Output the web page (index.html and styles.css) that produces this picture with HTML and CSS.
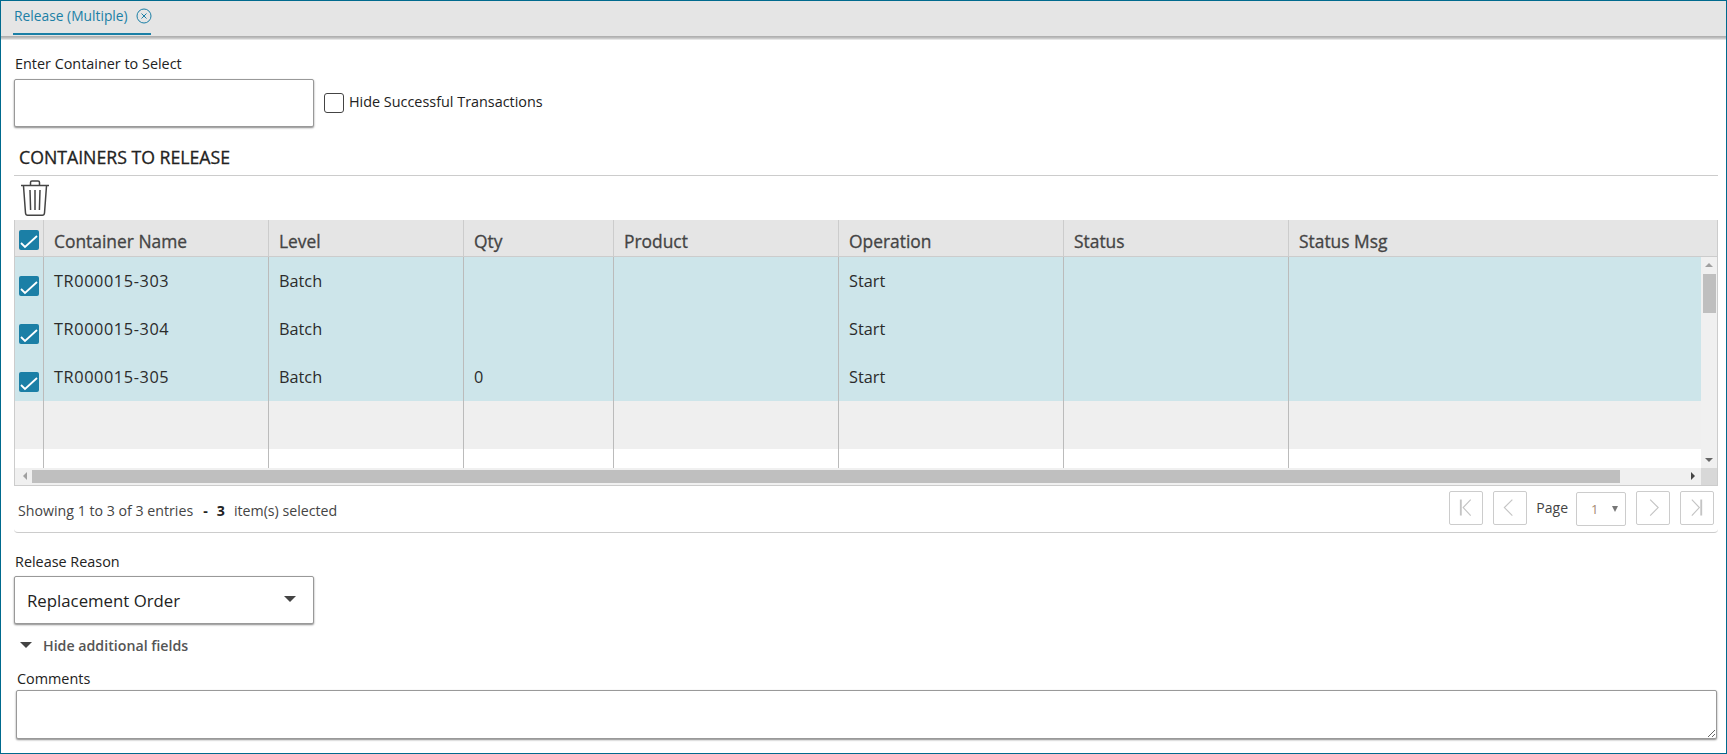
FILE: index.html
```html
<!DOCTYPE html>
<html lang="en">
<head>
    <meta charset="UTF-8">
    <meta name="viewport" content="width=device-width, initial-scale=1.0">
    <title>Release (Multiple)</title>
    <link rel="stylesheet" href="styles.css">
</head>
<body>
    <div class="frame">
        <div class="tabbar">
            <div class="tab">
                <span>Release (Multiple)</span>
                <svg class="tab_close" viewBox="0 0 16 16" width="16" height="16"><circle cx="8" cy="8" r="7" /><path d="M5.5 5.5l5 5M10.5 5.5l-5 5" /></svg>
            </div>
        </div>

        <div class="content">
            <label class="field_label first_label" for="container">Enter Container to Select</label>
            <div class="select_row">
                <input class="box_input" type="text" id="container">
                <span class="checkbox"></span>
                <span class="check_label">Hide Successful Transactions</span>
            </div>

            <h2 class="section_title">CONTAINERS TO RELEASE</h2>

            <svg class="trash" viewBox="0 0 28 36" width="28" height="36">
                <path d="M0 5.500h28M9.500 5V2.500q0-1.500 1.500-1.500h6q1.500 0 1.500 1.500V5" />
                <path d="M2.500 6l2 27q.2 2.200 2.200 2.200h14.600q2 0 2.200-2.200l2-27" />
                <path d="M9 10l.6 20M14 10v20M19 10l-.6 20" />
            </svg>

            <div class="grid">
                <div class="grid_row grid_head">
                    <div class="cell cell_check">
                        <span class="checked"><svg viewBox="0 0 20 20" width="20" height="20"><path d="M2 13l4 4L18 6" /></svg></span>
                    </div>
                    <div class="cell">Container Name</div>
                    <div class="cell">Level</div>
                    <div class="cell">Qty</div>
                    <div class="cell">Product</div>
                    <div class="cell">Operation</div>
                    <div class="cell">Status</div>
                    <div class="cell">Status Msg</div>
                </div>

                <div class="grid_middle">
                    <div class="grid_body">
                        <div class="grid_row row_selected">
                            <div class="cell cell_check">
                                <span class="checked"><svg viewBox="0 0 20 20" width="20" height="20"><path d="M2 13l4 4L18 6" /></svg></span>
                            </div>
                            <div class="cell cell_name">TR000015-303</div>
                            <div class="cell">Batch</div>
                            <div class="cell"></div>
                            <div class="cell"></div>
                            <div class="cell">Start</div>
                            <div class="cell"></div>
                            <div class="cell"></div>
                        </div>
                        <div class="grid_row row_selected">
                            <div class="cell cell_check">
                                <span class="checked"><svg viewBox="0 0 20 20" width="20" height="20"><path d="M2 13l4 4L18 6" /></svg></span>
                            </div>
                            <div class="cell cell_name">TR000015-304</div>
                            <div class="cell">Batch</div>
                            <div class="cell"></div>
                            <div class="cell"></div>
                            <div class="cell">Start</div>
                            <div class="cell"></div>
                            <div class="cell"></div>
                        </div>
                        <div class="grid_row row_selected">
                            <div class="cell cell_check">
                                <span class="checked"><svg viewBox="0 0 20 20" width="20" height="20"><path d="M2 13l4 4L18 6" /></svg></span>
                            </div>
                            <div class="cell cell_name">TR000015-305</div>
                            <div class="cell">Batch</div>
                            <div class="cell">0</div>
                            <div class="cell"></div>
                            <div class="cell">Start</div>
                            <div class="cell"></div>
                            <div class="cell"></div>
                        </div>
                        <div class="grid_row row_empty">
                            <div class="cell"></div><div class="cell"></div><div class="cell"></div><div class="cell"></div>
                            <div class="cell"></div><div class="cell"></div><div class="cell"></div><div class="cell"></div>
                        </div>
                        <div class="grid_row row_blank">
                            <div class="cell"></div><div class="cell"></div><div class="cell"></div><div class="cell"></div>
                            <div class="cell"></div><div class="cell"></div><div class="cell"></div><div class="cell"></div>
                        </div>
                    </div>
                    <div class="vscroll">
                        <span class="arrow_up"></span>
                        <span class="vthumb"></span>
                        <span class="arrow_down"></span>
                    </div>
                </div>

                <div class="hscroll">
                    <div class="htrack">
                        <span class="arrow_left"></span>
                        <span class="hthumb"></span>
                        <span class="arrow_right"></span>
                    </div>
                    <div class="corner"></div>
                </div>
            </div>

            <div class="grid_footer">
                <div class="entries">
                    <span>Showing 1 to 3 of 3 entries</span>
                    <b class="dash">-</b>
                    <b class="count">3</b>
                    <span>item(s) selected</span>
                </div>
                <div class="pager">
                    <span class="page_btn"><svg viewBox="0 0 34 34" width="32" height="32"><path d="M11.500 8v17" class="bar" /><path d="M22 8l-8 8.500 8 8.500" /></svg></span>
                    <span class="page_btn"><svg viewBox="0 0 34 34" width="32" height="32"><path d="M19.500 8l-8.500 8.500 8.500 8.500" /></svg></span>
                    <span class="page_text">Page</span>
                    <span class="page_select"><span>1</span><i></i></span>
                    <span class="page_btn"><svg viewBox="0 0 34 34" width="32" height="32"><path d="M14 8l8.500 8.500L14 25" /></svg></span>
                    <span class="page_btn"><svg viewBox="0 0 34 34" width="32" height="32"><path d="M11.500 8l8 8.500-8 8.500" /><path d="M21.500 8v17" class="bar" /></svg></span>
                </div>
            </div>

            <label class="field_label reason_label">Release Reason</label>
            <div class="box_input reason_select">
                <span>Replacement Order</span>
                <i class="caret"></i>
            </div>

            <div class="more_fields">
                <i class="caret"></i>
                <span>Hide additional fields</span>
            </div>

            <label class="field_label comments_label" for="comments">Comments</label>
            <textarea class="comments" id="comments"></textarea>
        </div>
    </div>
</body>
</html>
```

FILE: styles.css
```css
* {
    box-sizing: border-box;
}

html, body {
    margin: 0;
    height: 100%;
    overflow: hidden;
}

body {
    font-family: "Open Sans", "Noto Sans", Arial, sans-serif;
    font-size: 14.4px;
    color: #333;
    background: #fff;
}

.frame {
    width: 1727px;
    height: 754px;
    border: 1px solid #006a8e;
    overflow: hidden;
}

.tabbar {
    position: relative;
    height: 35px;
    padding-left: 12px;
    background: #e5e5e5;
    box-shadow: 0 1px 0 #b0b0b0, 0 2px 0 #bbb, 0 3px 0 #ccc, 0 4px 0 #e6e6e6;
}

.tab {
    display: flex;
    align-items: center;
    gap: 8px;
    width: 138px;
    height: 34px;
    padding: 0 0 3px 1px;
    border-bottom: 2px solid #1b7fa6;
    font-size: 13.800px;
    white-space: nowrap;
    color: #1b7fa6;
}

.tab_close {
    flex-shrink: 0;
    fill: none;
    stroke: #1b7fa6;
    stroke-width: 1;
}

.content {
    padding: 0 8px 0 13px;
}

.field_label {
    display: block;
    height: 20px;
    line-height: 20px;
    margin-left: 1px;
    color: #222;
}

.first_label {
    margin-top: 19px;
    line-height: 18px;
}

.select_row {
    display: flex;
    align-items: center;
    margin-top: 4px;
}

.box_input {
    width: 300px;
    height: 48px;
    background: #fff;
    border: 1px solid #999;
    border-radius: 2px;
    box-shadow: 0 1px 2px #888;
}

.checkbox {
    width: 20px;
    height: 20px;
    margin-left: 10px;
    border: 1px solid #444;
    border-radius: 3px;
}

.check_label {
    margin: 0 0 3px 5px;
    color: #222;
}

.section_title {
    height: 31px;
    margin: 18px 0 0;
    padding-left: 5px;
    border-bottom: 1px solid #ccc;
    font-size: 17.700px;
    font-weight: 400;
    -webkit-text-stroke: 0.3px #222;
    line-height: 24px;
    color: #222;
}

.trash {
    display: block;
    margin: 4px 0 4px 7px;
    fill: none;
    stroke: #444;
    stroke-width: 1.500;
}

.grid {
    height: 266px;
    border-left: 1px solid #ccc;
    border-right: 1px solid #ccc;
    border-bottom: 1px solid #ccc;
}

.grid_row {
    display: grid;
    grid-template-columns: 29px 225px 195px 150px 225px 225px 225px 1fr;
}

.grid_head {
    height: 37px;
    background: #e5e5e5;
    border-bottom: 1px solid #ccc;
    font-size: 17.400px;
    -webkit-text-stroke: 0.3px #444;
    color: #444;
}

.grid_head .cell {
    padding-top: 8px;
    line-height: 26px;
    border-right-color: #ccc;
}

.grid_head .cell:last-child,
.grid_body .cell:last-child {
    border-right: none;
}

.grid_head .cell_check {
    padding: 10px 0 0 4px;
}

.grid_middle {
    display: flex;
    height: 211px;
}

.grid_body {
    flex: 1;
    overflow: hidden;
    font-size: 16.300px;
    color: #2b2b2b;
}

.cell {
    padding-left: 10px;
    border-right: 1px solid #bbb;
    line-height: 48px;
}

.cell_name {
    letter-spacing: 0.6px;
}

.grid_body .grid_row {
    height: 48px;
}

.grid_body .cell_check {
    padding: 19px 0 0 4px;
}

.row_selected {
    background: #cde5ea;
}

.row_empty {
    background: #efefef;
}

.row_blank {
    background: #fff;
}

.checked {
    display: block;
    width: 20px;
    height: 20px;
    background: #1b7fa6;
    border-radius: 2px;
}

.checked svg {
    display: block;
    fill: none;
    stroke: #fff;
    stroke-width: 1.800;
}

.vscroll {
    position: relative;
    width: 16px;
    background: #f0f0f0;
}

.vthumb {
    position: absolute;
    top: 17px;
    left: 2px;
    width: 13px;
    height: 39px;
    background: #bfbfbf;
}

.arrow_up,
.arrow_down,
.arrow_left,
.arrow_right {
    position: absolute;
    width: 0;
    height: 0;
    border: 4px solid transparent;
}

.arrow_up {
    top: 2px;
    left: 4px;
    border-bottom-color: #a0a0a0;
}

.arrow_down {
    bottom: 2px;
    left: 4px;
    border-top-color: #666;
}

.hscroll {
    display: flex;
    height: 17px;
}

.htrack {
    position: relative;
    flex: 1;
    background: #f0f0f0;
}

.hthumb {
    position: absolute;
    top: 2px;
    left: 17px;
    width: 1588px;
    height: 13px;
    background: #bfbfbf;
}

.arrow_left {
    top: 4px;
    left: 4px;
    border-right-color: #a0a0a0;
}

.arrow_right {
    top: 4px;
    right: 2px;
    border-left-color: #444;
}

.corner {
    width: 16px;
    background: #d8d8d8;
}

.grid_footer {
    display: flex;
    justify-content: space-between;
    height: 47px;
    padding: 5px 4px 0 4px;
    border-bottom: 1px solid #ccc;
    border-radius: 0 0 4px 4px;
}

.entries {
    display: flex;
    height: 20px;
    margin-top: 10px;
    line-height: 20px;
    font-size: 14.200px;
    color: #444;
}

.dash {
    margin-left: 10px;
    color: #222;
}

.count {
    margin-left: 9px;
    color: #222;
}

.entries .count + span {
    margin-left: 9px;
}

.pager {
    display: flex;
    align-items: flex-start;
}

.page_btn {
    width: 34px;
    height: 34px;
    margin-right: 10px;
    border: 1px solid #ccc;
    border-radius: 2px;
}

.page_btn:last-child {
    margin-right: 0;
}

.page_btn svg {
    display: block;
    fill: none;
    stroke: #c4c4c4;
    stroke-width: 1.200;
}

.page_btn svg .bar {
    stroke-width: 2;
}

.page_text {
    height: 34px;
    margin: 0 8px 0 -1px;
    line-height: 34px;
    font-size: 14px;
    color: #444;
}

.page_select {
    display: flex;
    align-items: center;
    justify-content: space-between;
    width: 50px;
    height: 34px;
    margin: 1px 10px 0 0;
    padding: 0 7px 0 14px;
    border: 1px solid #ccc;
    border-radius: 2px;
    font-size: 13px;
    color: #a58a72;
}

.page_select i {
    border: 3.500px solid transparent;
    border-top: 6px solid #777;
    border-bottom: none;
}

.reason_label {
    margin-top: 19px;
}

.reason_select {
    display: flex;
    align-items: center;
    justify-content: space-between;
    margin-top: 4px;
    padding: 0 17px 0 12px;
    font-size: 16.800px;
    color: #222;
}

.caret {
    display: block;
    border: 6px solid transparent;
    border-top: 6px solid #444;
    border-bottom: none;
}

.reason_select .caret {
    margin-bottom: 2px;
}

.more_fields {
    display: flex;
    align-items: center;
    gap: 11px;
    height: 20px;
    margin-top: 12px;
    padding: 0 0 2px 6px;
    font-weight: 600;
    font-size: 14.200px;
    color: #555;
}

.comments_label {
    margin: 13px 0 0 3px;
}

.comments {
    display: block;
    width: 1701px;
    height: 49px;
    margin: 1px 0 0 2px;
    border: 1px solid #999;
    border-radius: 2px;
    box-shadow: 0 1px 2px #888;
    resize: vertical;
    outline: none;
}
```
